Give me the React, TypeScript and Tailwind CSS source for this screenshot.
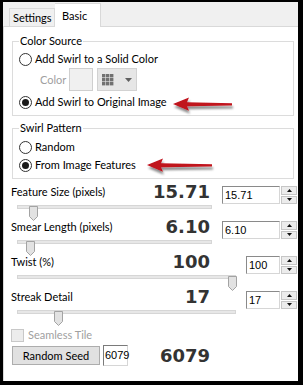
import React from 'react';

const ui = "font-['Lato',sans-serif] text-[11px] leading-[14px] text-black";
const big = "font-['DejaVu_Sans',sans-serif] font-bold text-[18px] leading-[16px] text-[#333]";

function Radio({ checked, label }: { checked?: boolean; label: string }) {
  return (
    <div className="flex items-center h-[14px]">
      <span className="w-[13px] h-[13px] rounded-full border border-[#333] bg-white flex items-center justify-center">
        {checked && <span className="w-[7px] h-[7px] rounded-full bg-[#1a1a1a]" />}
      </span>
      <span className="ml-[3px]">{label}</span>
    </div>
  );
}

function Group({ label, className, children }: { label: string; className: string; children: React.ReactNode }) {
  return (
    <div className={`relative ml-[1px] w-[282px] border border-[#dcdcdc] ${className}`}>
      <span className="absolute -top-[8px] left-[6px] bg-white px-[1px]">{label}</span>
      {children}
    </div>
  );
}

function Tri({ up }: { up?: boolean }) {
  return (
    <svg width="5" height="3" viewBox="0 0 5 3">
      <path d={up ? 'M2.5 0L5 3H0Z' : 'M0 0H5L2.5 3Z'} fill="#111" />
    </svg>
  );
}

function Spin({ value, w }: { value: string; w: string }) {
  return (
    <div className="flex mt-[2px] mr-[1px] h-[18px]">
      <div
        className={`${w} border border-[#8a8a8a] border-r-[#d6d6d6] border-b-[#d6d6d6] bg-white pl-[2px] font-['Liberation_Sans',sans-serif] text-[11px] leading-[16px]`}
      >
        {value}
      </div>
      <div className="ml-[1px] w-[16px] flex flex-col gap-[1px]">
        <div className="flex-1 bg-[#ececec] border border-[#c6c6c6] flex items-center justify-center">
          <Tri up />
        </div>
        <div className="flex-1 bg-[#ececec] border border-[#c6c6c6] flex items-center justify-center">
          <Tri />
        </div>
      </div>
    </div>
  );
}

function Thumb({ className }: { className: string }) {
  return (
    <svg className={`absolute top-[1px] ${className}`} width="9" height="15" viewBox="0 0 9 15">
      <path d="M0.5 0.5H8.5V10.5L4.5 14.5L0.5 10.5Z" fill="#e2e2e2" stroke="#a3a3a3" />
    </svg>
  );
}

function Block({
  label,
  num,
  spinW,
  trackW,
  thumb,
}: {
  label: string;
  num: string;
  spinW: string;
  trackW: string;
  thumb: string;
}) {
  return (
    <div className="flex h-[35px]">
      <div className="flex-1">
        <div className="w-[199px] h-[16px] flex items-center justify-between">
          <span>{label}</span>
          <span className={big}>{num}</span>
        </div>
        <div className="relative h-[16px]">
          <div className={`ml-[6px] mt-[5px] h-[4px] bg-[#e7e7e7] border border-[#d6d6d6] ${trackW}`} />
          <Thumb className={thumb} />
        </div>
      </div>
      <Spin value={num} w={spinW} />
    </div>
  );
}

function Arrow({ className, len }: { className: string; len: number }) {
  const end = len + 4;
  return (
    <svg className={`absolute ${className}`} width={end + 6} height="20" viewBox={`0 0 ${end + 6} 20`}>
      <defs>
        <filter id={`sh${len}`} x="-10%" y="-40%" width="130%" height="200%">
          <feDropShadow dx="1" dy="3" stdDeviation="1.3" floodColor="#000" floodOpacity="0.45" />
        </filter>
      </defs>
      <path
        d={`M4 8L20 1.5L18 6.2L${end} 7.2V9.4L18 10.2L20 14.8Z`}
        fill="#c0121c"
        filter={`url(#sh${len})`}
      />
    </svg>
  );
}

export default function App() {
  return (
    <div className={`w-[303px] h-[385px] bg-black pt-[2px] pl-[3px] pr-[5px] pb-[4px] ${ui}`}>
      <div className="h-full bg-[#f0f0f0] flex flex-col">
        <div className="h-[24px] flex items-end">
          <div className="ml-[6px] w-[46px] h-[18px] border border-b-0 border-[#d9d9d9] pl-[3px] pt-[2px]">
            Settings
          </div>
          <div className="relative z-10 -mb-[1px] w-[46px] h-[24px] border border-b-0 border-l-0 border-[#d9d9d9] bg-white pl-[7px] pt-[5px]">
            Basic
          </div>
        </div>

        <div className="relative flex-1 bg-white border-t border-l border-[#d9d9d9] pl-[7px]">
          <Group label="Color Source" className="mt-[14px] h-[75px] pt-[10px] pl-[6px]">
            <Radio label="Add Swirl to a Solid Color" />
            <div className="mt-[2px] h-[23px] flex items-center">
              <span className="ml-[21px] w-[29px] text-[#a0a0a0]">Color</span>
              <span className="w-[24px] h-[23px] border border-[#cfcfcf] bg-[#f0f0f0]" />
              <span className="ml-[4px] w-[40px] h-[23px] border border-[#d2d2d2] bg-[#e6e6e6] flex items-center pl-[4px]">
                <svg width="12" height="12" viewBox="0 0 12 12">
                  {[0, 4, 8].map((y) =>
                    [0, 4, 8].map((x) => <rect key={`${x}-${y}`} x={x} y={y} width="3.4" height="3.4" fill="#707070" />)
                  )}
                </svg>
                <svg className="ml-[11px]" width="7" height="4" viewBox="0 0 7 4">
                  <path d="M0 0H7L3.5 4Z" fill="#606060" />
                </svg>
              </span>
            </div>
            <div className="mt-[4px]">
              <Radio checked label="Add Swirl to Original Image" />
            </div>
          </Group>

          <Group label="Swirl Pattern" className="mt-[12px] h-[51px] pt-[11px] pl-[6px]">
            <Radio label="Random" />
            <div className="mt-[4px]">
              <Radio checked label="From Image Features" />
            </div>
          </Group>

          <div className="mt-[5px]">
            <Block label="Feature Size (pixels)" num="15.71" spinW="w-[58px]" trackW="w-[195px]" thumb="left-[18px]" />
            <Block label="Smear Length (pixels)" num="6.10" spinW="w-[58px]" trackW="w-[195px]" thumb="left-[15px]" />
            <Block label="Twist (%)" num="100" spinW="w-[34px]" trackW="w-[219px]" thumb="left-[217px]" />
            <Block label="Streak Detail" num="17" spinW="w-[34px]" trackW="w-[219px]" thumb="left-[43px]" />
          </div>

          <div className="mt-[4px] h-[14px] flex items-center">
            <span className="w-[13px] h-[13px] border border-[#c8c8c8] bg-[#ececec]" />
            <span className="ml-[4px] text-[#a0a0a0]">Seamless Tile</span>
          </div>

          <div className="mt-[3px] w-[199px] h-[21px] flex items-center justify-between">
            <div className="flex items-center">
              <button className="ml-[1px] w-[88px] h-[19px] bg-[#e1e1e1] border border-[#adadad] text-[11px] leading-[14px]">
                Random Seed
              </button>
              <div className="ml-[3px] w-[25px] h-[21px] border border-[#7a7a7a] border-r-[#d6d6d6] border-b-[#d6d6d6] bg-white pl-[1px] font-['Liberation_Sans',sans-serif] text-[11px] leading-[19px]">
                6079
              </div>
            </div>
            <span className={big}>6079</span>
          </div>

          <Arrow className="left-[165px] top-[69px]" len={59} />
          <Arrow className="left-[139px] top-[130px]" len={65} />
        </div>
      </div>
    </div>
  );
}
